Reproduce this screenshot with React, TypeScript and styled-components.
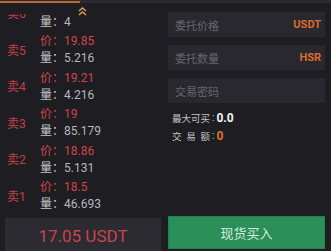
import React from "react";
import styled, { createGlobalStyle } from "styled-components";

const GlobalStyle = createGlobalStyle`
  html, body {
    margin: 0;
    padding: 0;
    background: #1e1d22;
    overflow: hidden;
  }
  * { box-sizing: border-box; }
`;

const FONT = `Roboto, "Noto Sans CJK SC", "Noto Sans", sans-serif`;

const Screen = styled.div`
  width: 331px;
  height: 251px;
  overflow: hidden;
  display: flex;
  flex-direction: column;
  background: #1e1d22;
  font-family: ${FONT};
`;

const TopBar = styled.div`
  height: 3px;
  flex: none;
  display: flex;
  align-items: flex-end;
  background: #2b2a30;
`;

const TabIndicator = styled.div`
  width: 80px;
  height: 2px;
  background: #b8693c;
`;

const Main = styled.div`
  flex: 1;
  display: flex;
  min-height: 0;
`;

const LeftPanel = styled.div`
  position: relative;
  width: 165px;
  flex: none;
  display: flex;
  flex-direction: column;
  padding-top: 11px;
`;

const ScrollUp = styled.div`
  position: absolute;
  left: 78px;
  top: 4px;
  width: 9px;
  height: 9px;
  display: flex;
  z-index: 1;
`;

const OrderClip = styled.div`
  height: 200px;
  flex: none;
  overflow: hidden;
  display: flow-root;
`;

const OrderList = styled.div`
  margin-top: -17.5px;
  display: flex;
  flex-direction: column;
  gap: 2.6px;
`;

const Group = styled.div`
  display: flex;
  align-items: center;
  height: 34px;
`;

const SideLabel = styled.div`
  width: 40px;
  padding-left: 7px;
  padding-top: 2px;
  font-size: 12px;
  color: #c43f46;
  line-height: 17px;
`;

const Lines = styled.div`
  display: flex;
  flex-direction: column;
`;

const Line = styled.div<{ $tone: "price" | "qty" }>`
  height: 17px;
  line-height: 17px;
  font-size: 12px;
  white-space: nowrap;
  color: ${(p) => (p.$tone === "price" ? "#cf454b" : "#b6b6bb")};
`;

const Key = styled.span<{ $tone: "price" | "qty" }>`
  color: ${(p) => (p.$tone === "price" ? "#cf454b" : "#c6c6ca")};
`;

const PriceBox = styled.div`
  margin: 4px 0 0 5px;
  width: 156px;
  height: 36px;
  flex: none;
  background: #2c2b32;
  display: flex;
  align-items: center;
  justify-content: center;
  font-size: 17px;
  color: #c6464b;
`;

const RightPanel = styled.div`
  width: 157px;
  margin-left: 3px;
  flex: none;
  display: flex;
  flex-direction: column;
  padding-top: 9px;
`;

const Fields = styled.div`
  display: flex;
  flex-direction: column;
  gap: 8px;
`;

const Field = styled.div`
  height: 25px;
  background: #29282f;
  display: flex;
  align-items: center;
  justify-content: space-between;
  padding: 0 4px 0 7px;
`;

const Placeholder = styled.span`
  font-size: 11px;
  color: #66656d;
`;

const Unit = styled.span`
  font-size: 11px;
  font-weight: 700;
  color: #dc6b2c;
`;

const Info = styled.div`
  margin-top: 5.5px;
  padding-left: 4px;
  display: flex;
  flex-direction: column;
`;

const InfoRow = styled.div`
  height: 18px;
  display: flex;
  align-items: center;
`;

const InfoLabel = styled.span`
  width: 38px;
  font-size: 9.5px;
  color: #c4c4c8;
  text-align: justify;
  text-align-last: justify;
`;

const InfoColon = styled.span`
  font-size: 10px;
  color: #c4c4c8;
  margin: 0 2px 0 2px;
`;

const InfoValue = styled.span<{ $accent?: boolean }>`
  font-size: 12px;
  font-weight: 700;
  color: ${(p) => (p.$accent ? "#e06e2c" : "#f2f2f2")};
`;

const BuyButton = styled.button`
  margin-top: 71.5px;
  height: 33px;
  width: 157px;
  flex: none;
  border: 1px solid #24824f;
  background: #2a8f59;
  color: #d6ebdc;
  font-family: ${FONT};
  font-size: 13px;
  padding: 0;
  display: flex;
  align-items: center;
  justify-content: center;
`;

type Order = { label: string; price: string; qty: string };

const orders: Order[] = [
  { label: "卖6", price: "20.12", qty: "4" },
  { label: "卖5", price: "19.85", qty: "5.216" },
  { label: "卖4", price: "19.21", qty: "4.216" },
  { label: "卖3", price: "19", qty: "85.179" },
  { label: "卖2", price: "18.86", qty: "5.131" },
  { label: "卖1", price: "18.5", qty: "46.693" },
];

const DoubleChevron = () => (
  <svg width="9" height="9" viewBox="0 0 9 9" fill="none">
    <polyline points="1,4 4.5,1 8,4" stroke="#e2a24e" strokeWidth="1.4" />
    <polyline points="1,8 4.5,5 8,8" stroke="#e2a24e" strokeWidth="1.4" />
  </svg>
);

export default function App() {
  return (
    <>
      <GlobalStyle />
      <Screen>
        <TopBar>
          <TabIndicator />
        </TopBar>
        <Main>
          <LeftPanel>
            <ScrollUp>
              <DoubleChevron />
            </ScrollUp>
            <OrderClip>
              <OrderList>
                {orders.map((o) => (
                  <Group key={o.label}>
                    <SideLabel>{o.label}</SideLabel>
                    <Lines>
                      <Line $tone="price">
                        <Key $tone="price">价：</Key>
                        {o.price}
                      </Line>
                      <Line $tone="qty">
                        <Key $tone="qty">量：</Key>
                        {o.qty}
                      </Line>
                    </Lines>
                  </Group>
                ))}
              </OrderList>
            </OrderClip>
            <PriceBox>17.05 USDT</PriceBox>
          </LeftPanel>
          <RightPanel>
            <Fields>
              <Field>
                <Placeholder>委托价格</Placeholder>
                <Unit>USDT</Unit>
              </Field>
              <Field>
                <Placeholder>委托数量</Placeholder>
                <Unit>HSR</Unit>
              </Field>
              <Field>
                <Placeholder>交易密码</Placeholder>
              </Field>
            </Fields>
            <Info>
              <InfoRow>
                <InfoLabel>最大可买</InfoLabel>
                <InfoColon>:</InfoColon>
                <InfoValue>0.0</InfoValue>
              </InfoRow>
              <InfoRow>
                <InfoLabel>交易额</InfoLabel>
                <InfoColon>:</InfoColon>
                <InfoValue $accent>0</InfoValue>
              </InfoRow>
            </Info>
            <BuyButton>现货买入</BuyButton>
          </RightPanel>
        </Main>
      </Screen>
    </>
  );
}
